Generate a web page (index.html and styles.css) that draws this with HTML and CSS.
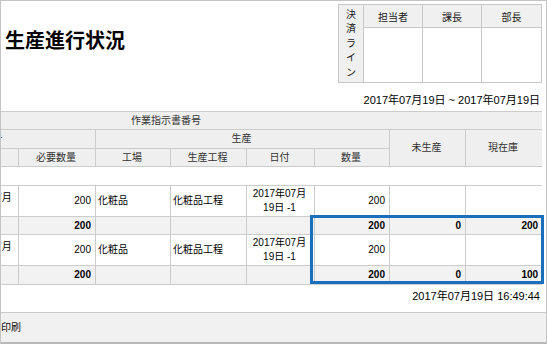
FILE: index.html
```html
<!DOCTYPE html>
<html lang="ja">
<head>
<meta charset="utf-8">
<title>生産進行状況</title>
<link rel="stylesheet" href="styles.css">
</head>
<body>
<div class="frame">
  <div class="top">
    <h1 class="title">生産進行状況</h1>
    <table class="approval">
      <colgroup><col class="ap-c1"><col class="ap-c2"><col class="ap-c2"><col class="ap-c3"></colgroup>
      <tr class="ap-head">
        <th class="ap-side" rowspan="2">決<br>済<br>ラ<br>イ<br>ン</th>
        <th>担当者</th><th>課長</th><th>部長</th>
      </tr>
      <tr class="ap-body"><td></td><td></td><td></td></tr>
    </table>
  </div>
  <div class="period">2017年07月19日 ~ 2017年07月19日</div>
  <div class="grid-wrap">
    <table class="grid">
      <colgroup>
        <col class="c-x"><col class="c-a"><col class="c-b"><col class="c-req">
        <col class="c-fac"><col class="c-proc"><col class="c-date"><col class="c-qty">
        <col class="c-rem"><col class="c-stock">
      </colgroup>
      <thead>
        <tr class="h1"><th colspan="10">作業指示書番号</th></tr>
        <tr class="h2">
          <th rowspan="2">品目</th><th colspan="3">受注番号</th><th colspan="4">生産</th>
          <th rowspan="2">未生産</th><th rowspan="2">現在庫</th>
        </tr>
        <tr class="h3">
          <th>受注日</th><th>納期</th><th>必要数量</th><th>工場</th><th>生産工程</th><th>日付</th><th>数量</th>
        </tr>
      </thead>
      <tbody>
        <tr class="order"><td colspan="10"></td></tr>
        <tr class="item">
          <td>品目A</td><td>2017年07月19日</td><td class="clip">2017年07月</td><td class="num">200</td>
          <td>化粧品</td><td>化粧品工程</td><td class="date">2017年07月<br>19日 -1</td><td class="num">200</td>
          <td></td><td></td>
        </tr>
        <tr class="sub">
          <td></td><td></td><td></td><td class="num">200</td>
          <td></td><td></td><td></td><td class="num">200</td>
          <td class="num">0</td><td class="num">200</td>
        </tr>
        <tr class="item">
          <td>品目A</td><td>2017年07月19日</td><td class="clip">2017年07月</td><td class="num">200</td>
          <td>化粧品</td><td>化粧品工程</td><td class="date">2017年07月<br>19日 -1</td><td class="num">200</td>
          <td></td><td></td>
        </tr>
        <tr class="sub sub-last">
          <td></td><td></td><td></td><td class="num">200</td>
          <td></td><td></td><td></td><td class="num">200</td>
          <td class="num">0</td><td class="num">100</td>
        </tr>
      </tbody>
    </table>
  </div>
  <div class="stamp">2017年07月19日 16:49:44</div>
  <div class="footer">印刷</div>
  <div class="highlight"></div>
</div>
</body>
</html>
```

FILE: styles.css
```css
* { box-sizing: border-box; }
html, body { margin: 0; padding: 0; background: #fff; }
body {
  font-family: "Liberation Sans", "Noto Sans CJK JP", sans-serif;
  color: #000;
}
.frame {
  position: relative;
  width: 547px;
  height: 344px;
  border: 1px solid #c4c4c4;
  border-bottom: 0;
  display: flex;
  flex-direction: column;
  overflow: hidden;
}
.top {
  display: flex;
  justify-content: space-between;
  align-items: flex-start;
  padding: 3px 4px 0 4px;
}
.title {
  margin: 24px 0 0;
  font-family: "Noto Sans CJK JP", sans-serif;
  font-size: 20px;
  line-height: 24px;
  font-weight: bold;
}
.approval {
  border-collapse: collapse;
  table-layout: fixed;
  width: 204px;
  font-size: 10px;
  color: #222;
}
.ap-c1 { width: 25px; }
.ap-c2 { width: 59px; }
.ap-c3 { width: 60px; }
.approval th, .approval td {
  border: 1px solid #c8c8c8;
  padding: 0;
}
.ap-head th {
  height: 23px;
  background: #f0f0f0;
  font-weight: normal;
  text-align: center;
}
.ap-head .ap-side {
  line-height: 14.5px;
  vertical-align: middle;
  padding-top: 1px;
}
.ap-body td { height: 55px; }
.period, .stamp {
  font-size: 11px;
  line-height: 14px;
  text-align: right;
  padding-right: 6px;
}
.period { margin-top: 10px; }
.stamp { margin-top: 4px; }
.grid-wrap {
  margin: 4px 4px 0 0;
  overflow: hidden;
}
.grid {
  border-collapse: collapse;
  table-layout: fixed;
  width: 751px;
  margin-left: -210px;
  font-size: 10px;
  line-height: 14px;
}
.c-x { width: 80px; }
.c-a { width: 72px; }
.c-b { width: 75px; }
.c-req { width: 77px; }
.c-fac { width: 75px; }
.c-proc { width: 76px; }
.c-date { width: 68px; }
.c-qty { width: 75px; }
.c-rem { width: 76px; }
.c-stock { width: 77px; }
.grid th, .grid td {
  border: 1px solid #cccccc;
  padding: 0 4px 0 2px;
  white-space: nowrap;
  overflow: hidden;
}
.grid th {
  background: #efefef;
  font-weight: normal;
  color: #333;
  text-align: center;
}
.h1 { height: 18px; }
.h2 { height: 19px; }
.h3 { height: 18px; }
.order { height: 19px; }
.item { height: 31px; }
.sub { height: 18px; }
.sub-last { height: 19px; }
.grid td { vertical-align: middle; text-align: left; }
.grid td.num { text-align: right; }
.grid td.date { text-align: center; }
.grid td.clip { text-align: center; padding: 0 0 6px 8px; }
.sub td {
  background: #f2f2f2;
  font-weight: bold;
}
.footer {
  margin-top: auto;
  height: 32px;
  border-top: 1px solid #c8c8c8;
  border-bottom: 2px solid #b8b8b8;
  background: #f1f1f1;
  font-size: 10px;
  line-height: 29px;
  color: #111;
}
.highlight {
  position: absolute;
  left: 309px;
  top: 214px;
  width: 234px;
  height: 69px;
  border: 3px solid #1a6fbd;
}
```
